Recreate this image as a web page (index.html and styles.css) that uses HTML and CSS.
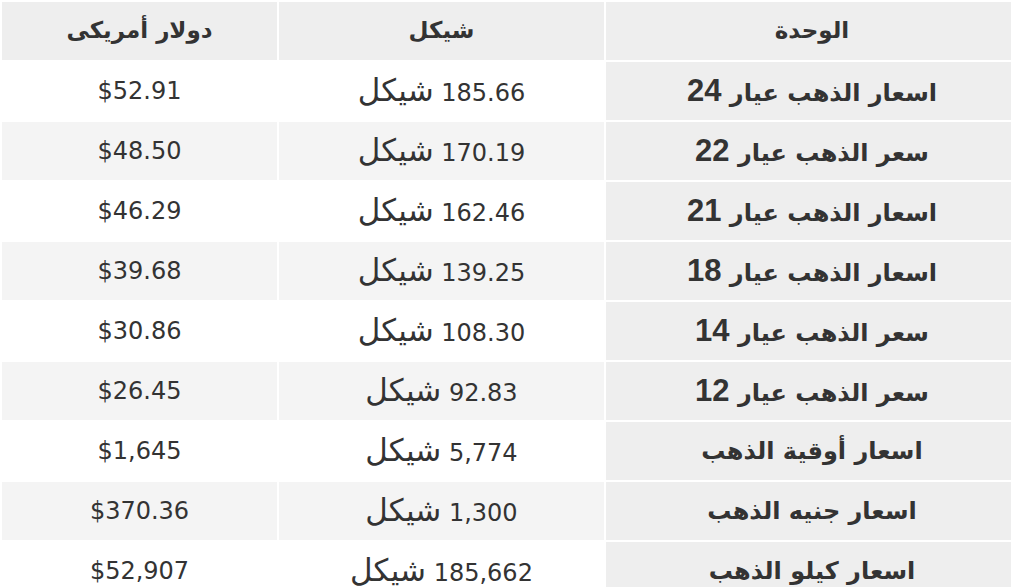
FILE: index.html
```html
<!DOCTYPE html>
<html lang="ar">
<head>
<meta charset="utf-8">
<title>أسعار الذهب</title>
<link rel="stylesheet" href="styles.css">
</head>
<body>
<table class="prices" dir="rtl">
  <colgroup>
    <col class="col-unit">
    <col class="col-ils">
    <col class="col-usd">
  </colgroup>
  <thead>
    <tr>
      <th>الوحدة</th>
      <th>شيكل</th>
      <th>دولار أمريكى</th>
    </tr>
  </thead>
  <tbody>
    <tr><td class="unit">اسعار الذهب عيار <span class="karat">24</span></td><td>185.66 <span class="cur">شيكل</span></td><td class="usd">$52.91</td></tr>
    <tr><td class="unit">سعر الذهب عيار <span class="karat">22</span></td><td>170.19 <span class="cur">شيكل</span></td><td class="usd">$48.50</td></tr>
    <tr><td class="unit">اسعار الذهب عيار <span class="karat">21</span></td><td>162.46 <span class="cur">شيكل</span></td><td class="usd">$46.29</td></tr>
    <tr><td class="unit">اسعار الذهب عيار <span class="karat">18</span></td><td>139.25 <span class="cur">شيكل</span></td><td class="usd">$39.68</td></tr>
    <tr><td class="unit">سعر الذهب عيار <span class="karat">14</span></td><td>108.30 <span class="cur">شيكل</span></td><td class="usd">$30.86</td></tr>
    <tr><td class="unit">سعر الذهب عيار <span class="karat">12</span></td><td>92.83 <span class="cur">شيكل</span></td><td class="usd">$26.45</td></tr>
    <tr><td class="unit">اسعار أوقية الذهب</td><td>5,774 <span class="cur">شيكل</span></td><td class="usd">$1,645</td></tr>
    <tr><td class="unit">اسعار جنيه الذهب</td><td>1,300 <span class="cur">شيكل</span></td><td class="usd">$370.36</td></tr>
    <tr><td class="unit">اسعار كيلو الذهب</td><td>185,662 <span class="cur">شيكل</span></td><td class="usd">$52,907</td></tr>
  </tbody>
</table>
</body>
</html>
```

FILE: styles.css
```css
html, body {
  margin: 0;
  padding: 0;
  background: #fff;
  overflow: hidden;
}

.prices {
  border-collapse: separate;
  border-spacing: 2px;
  table-layout: fixed;
  width: 1020px;
  color: #333;
  font-family: "DejaVu Sans", sans-serif;
  font-size: 24px;
  line-height: 1.2;
}

.col-unit { width: 412px; }
.col-ils { width: 325px; }
.col-usd { width: 275px; }

.prices th,
.prices td {
  height: 58px;
  padding: 0;
  text-align: center;
  vertical-align: middle;
  white-space: nowrap;
}

.prices th {
  background: #eee;
  font-family: "DejaVu Sans", sans-serif;
  font-weight: bold;
  font-size: 23px;
}

.prices td {
  background: #fff;
}

.prices tbody tr:nth-child(even) td {
  background: #f4f4f4;
}

.prices td.unit,
.prices tbody tr:nth-child(even) td.unit {
  background: #eee;
  font-family: "DejaVu Sans", sans-serif;
  font-weight: bold;
  font-size: 24px;
}

.karat {
  font-family: "Liberation Sans", Arial, sans-serif;
  font-size: 31px;
  font-weight: bold;
  line-height: 1;
}

.cur {
  font-size: 31px;
  line-height: 1;
}

.prices td.usd {
  direction: ltr;
}
```
